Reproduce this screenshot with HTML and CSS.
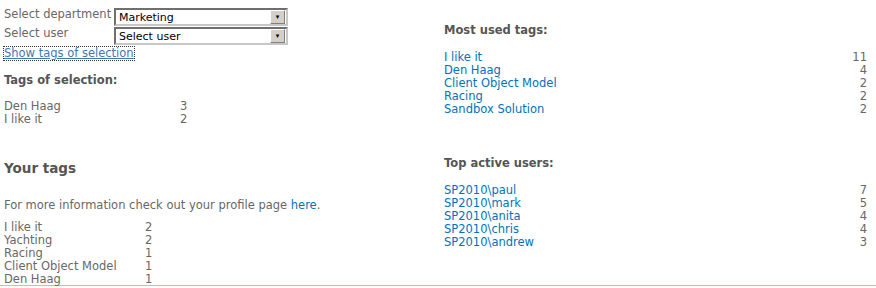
FILE: index.html
```html
<!DOCTYPE html>
<html lang="en">
<head>
    <meta charset="UTF-8">
    <title>Tag Overview</title>
    <link rel="stylesheet" href="styles.css">
</head>
<body>
    <div class="page">
        <div class="col-left">
            <div class="field-row">
                <span class="field-label">Select department</span>
                <div class="select"><span class="select-value">Marketing</span><span class="select-btn">&#9662;</span></div>
            </div>
            <div class="field-row">
                <span class="field-label">Select user</span>
                <div class="select"><span class="select-value">Select user</span><span class="select-btn">&#9662;</span></div>
            </div>
            <a class="show-link" href="#">Show tags of selection</a>

            <h3 class="section-title first">Tags of selection:</h3>
            <table class="tag-table sel">
                <tr><td>Den Haag</td><td>3</td></tr>
                <tr><td>I like it</td><td>2</td></tr>
            </table>

            <h2 class="big-title">Your tags</h2>
            <p class="info">For more information check out your profile page <a href="#">here</a>.</p>
            <table class="tag-table mine">
                <tr><td>I like it</td><td>2</td></tr>
                <tr><td>Yachting</td><td>2</td></tr>
                <tr><td>Racing</td><td>1</td></tr>
                <tr><td>Client Object Model</td><td>1</td></tr>
                <tr><td>Den Haag</td><td>1</td></tr>
            </table>
        </div>

        <div class="col-right">
            <h3 class="section-title top">Most used tags:</h3>
            <ul class="rank-list">
                <li><a href="#">I like it</a><span>11</span></li>
                <li><a href="#">Den Haag</a><span>4</span></li>
                <li><a href="#">Client Object Model</a><span>2</span></li>
                <li><a href="#">Racing</a><span>2</span></li>
                <li><a href="#">Sandbox Solution</a><span>2</span></li>
            </ul>

            <h3 class="section-title users">Top active users:</h3>
            <ul class="rank-list">
                <li><a href="#">SP2010\paul</a><span>7</span></li>
                <li><a href="#">SP2010\mark</a><span>5</span></li>
                <li><a href="#">SP2010\anita</a><span>4</span></li>
                <li><a href="#">SP2010\chris</a><span>4</span></li>
                <li><a href="#">SP2010\andrew</a><span>3</span></li>
            </ul>
        </div>
    </div>
</body>
</html>
```

FILE: styles.css
```css
body {
    margin: 0;
    font-family: "DejaVu Sans", Verdana, sans-serif;
    font-size: 11.5px;
    color: #676767;
    background: #fff;
}

a {
    color: #0072bc;
    text-decoration: none;
}

.page {
    display: flex;
    height: 285px;
    border-bottom: 1px solid #a3c6ea;
}

.col-left {
    width: 444px;
    padding: 8px 0 0 4px;
    box-sizing: border-box;
}

.col-right {
    flex: 1;
    padding: 0 9px 0 0;
}

.field-row {
    display: flex;
    height: 19px;
    line-height: 13px;
}

.field-label {
    width: 110px;
}

.select {
    width: 174px;
    height: 18px;
    box-sizing: border-box;
    border: 2px solid #6f6f6f;
    border-right-color: #c7c7c7;
    border-bottom-color: #c7c7c7;
    display: flex;
    align-items: center;
    background: #fff;
    color: #000;
    font-size: 11px;
}

.select-value {
    flex: 1;
    padding-left: 3px;
}

.select-btn {
    width: 13px;
    height: 12px;
    margin-right: 1px;
    background: #d4d0c8;
    border: 1px solid #fff;
    border-right-color: #808080;
    border-bottom-color: #808080;
    font-size: 7px;
    line-height: 12px;
    text-align: center;
    color: #000;
}

.show-link {
    display: inline-block;
    margin-top: 1px;
    line-height: 13px;
    outline: 1px dotted #333;
    color: #3b79b5;
    text-decoration: underline;
}

.section-title {
    margin: 0;
    font-size: 11.5px;
    font-weight: bold;
    color: #555;
    line-height: 13px;
}

.section-title.first {
    margin-top: 14px;
}

.tag-table {
    border-collapse: collapse;
    margin-top: 13px;
}

.tag-table td {
    padding: 0;
    line-height: 13px;
    vertical-align: top;
}

.tag-table.sel td:first-child {
    width: 176px;
}

.tag-table.mine td:first-child {
    width: 141px;
}

.big-title {
    margin: 34px 0 0;
    font-size: 13.5px;
    font-weight: bold;
    color: #555;
    line-height: 16px;
}

.info {
    margin: 23px 0 9px;
    line-height: 13px;
}

.tag-table.mine {
    margin-top: 0;
}

.section-title.top {
    margin-top: 24px;
}

.section-title.users {
    margin-top: 41px;
}

.rank-list {
    list-style: none;
    margin: 14px 0 0;
    padding: 0;
}

.rank-list li {
    display: flex;
    justify-content: space-between;
    line-height: 13px;
}
```
